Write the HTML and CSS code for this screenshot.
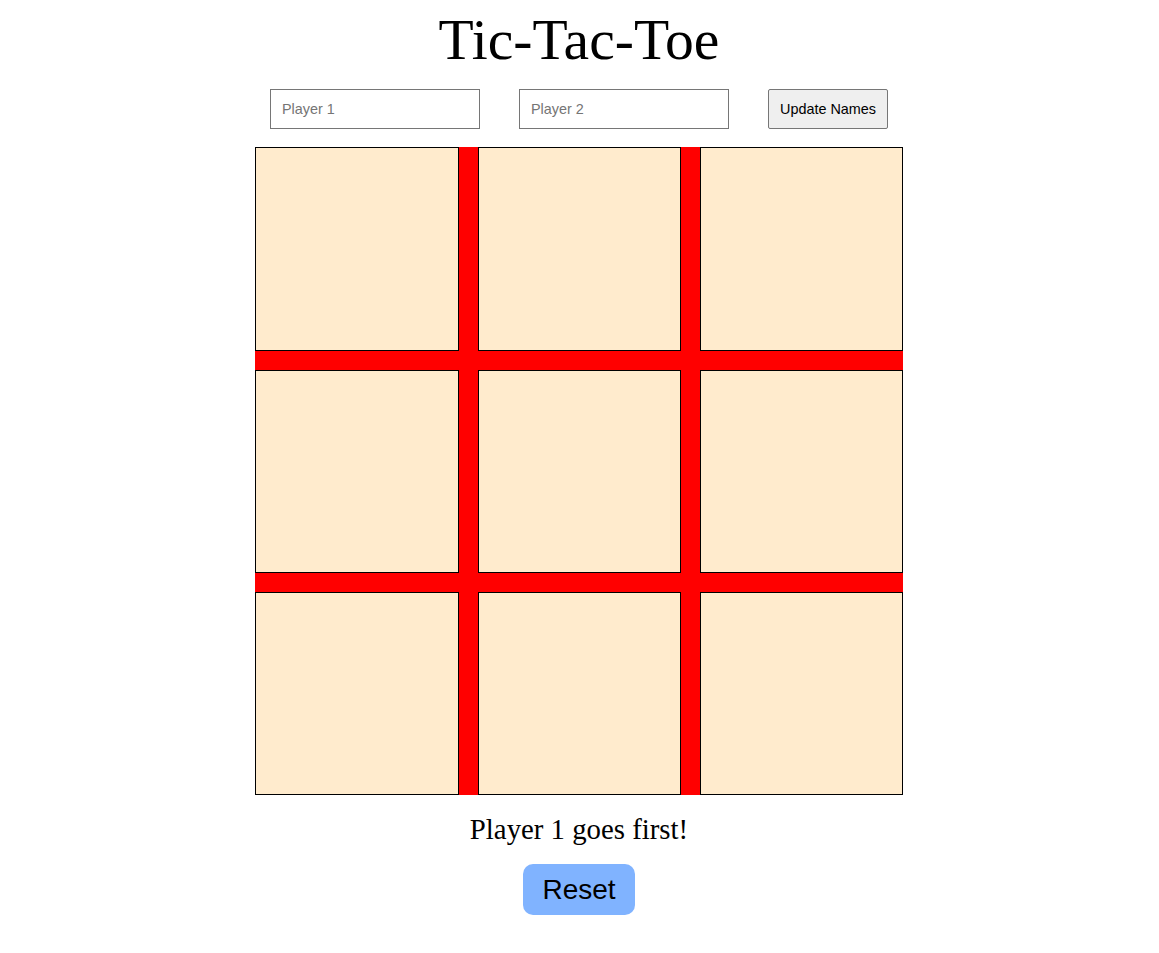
FILE: index.html
```html
<!DOCTYPE html>
<html lang="en">
<head>
<meta charset="utf-8">
<title>Tic-Tac-Toe</title>
<link rel="stylesheet" href="styles.css">
</head>
<body>
<main class="game">
  <h1 class="title">Tic-Tac-Toe</h1>
  <div class="controls">
    <input class="name-input" type="text" placeholder="Player 1">
    <input class="name-input" type="text" placeholder="Player 2">
    <button class="update-btn" type="button">Update Names</button>
  </div>
  <div class="board">
    <div class="cell"></div>
    <div class="cell"></div>
    <div class="cell"></div>
    <div class="cell"></div>
    <div class="cell"></div>
    <div class="cell"></div>
    <div class="cell"></div>
    <div class="cell"></div>
    <div class="cell"></div>
  </div>
  <p class="status">Player 1 goes first!</p>
  <button class="reset-btn" type="button">Reset</button>
</main>
</body>
</html>
```
FILE: styles.css
```css
html, body {
  background: #ffffff;
}
body {
  margin: 8px 9px 8px 8px;
  font-family: "Liberation Serif", "Times New Roman", serif;
  color: #000000;
}
.game {
  display: flex;
  flex-direction: column;
  align-items: center;
  gap: 18px;
}
.title {
  margin: 0;
  font-size: 57.6px;
  font-weight: normal;
  line-height: 63px;
}
.controls {
  display: flex;
  align-items: center;
  gap: 39px;
}
.name-input {
  box-sizing: border-box;
  width: 210px;
  height: 40px;
  margin: 0;
  padding: 0 11px;
  border: 1px solid #767676;
  border-radius: 0;
  font-family: "Liberation Sans", Arial, sans-serif;
  font-size: 14.4px;
  background: #ffffff;
}
.name-input::placeholder {
  color: #757575;
}
.update-btn {
  box-sizing: border-box;
  width: 120px;
  height: 40px;
  margin: 0;
  padding: 0;
  border: 1px solid #767676;
  border-radius: 2px;
  background: #efefef;
  color: #000000;
  font-family: "Liberation Sans", Arial, sans-serif;
  font-size: 14.4px;
}
.board {
  width: 648px;
  height: 648px;
  display: grid;
  grid-template-columns: 204px 203px 203px;
  grid-template-rows: 204px 203px 203px;
  gap: 19px;
  background: #ff0000;
}
.cell {
  background: #ffebcd;
  border: 1px solid #000000;
}
.status {
  margin: 0;
  font-size: 28.8px;
  line-height: normal;
}
.reset-btn {
  box-sizing: border-box;
  height: 51px;
  margin: 0;
  padding: 0 19.5px;
  border: none;
  border-radius: 10px;
  background: #80b3ff;
  color: #000000;
  font-family: "Liberation Sans", Arial, sans-serif;
  font-size: 28px;
}
```
